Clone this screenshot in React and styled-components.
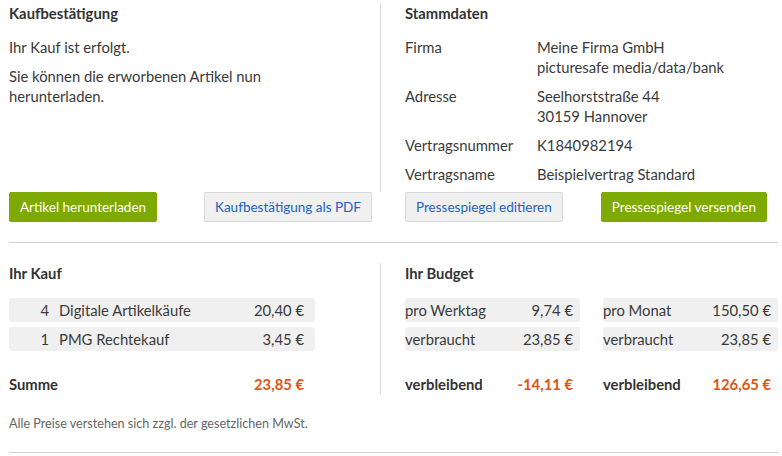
import styled, { createGlobalStyle } from "styled-components";

const GlobalStyle = createGlobalStyle`
  body {
    margin: 0;
    background: #fff;
    font-family: Lato, "Open Sans", sans-serif;
    font-size: 14.8px;
    color: #3a3a3a;
  }
`;

const stammdaten = [
  { label: "Firma", value: ["Meine Firma GmbH", "picturesafe media/data/bank"] },
  { label: "Adresse", value: ["Seelhorststraße 44", "30159 Hannover"] },
  { label: "Vertragsnummer", value: ["K1840982194"] },
  { label: "Vertragsname", value: ["Beispielvertrag Standard"] },
];

const kauf = [
  { qty: 4, name: "Digitale Artikelkäufe", price: "20,40 €" },
  { qty: 1, name: "PMG Rechtekauf", price: "3,45 €" },
];

const budget = [
  { rows: [["pro Werktag", "9,74 €"], ["verbraucht", "23,85 €"]], rest: "-14,11 €" },
  { rows: [["pro Monat", "150,50 €"], ["verbraucht", "23,85 €"]], rest: "126,65 €" },
];

export default function App() {
  return (
    <Page>
      <GlobalStyle />
      <TopSection>
        <InfoCell $divider>
          <Heading>Kaufbestätigung</Heading>
          <Text>Ihr Kauf ist erfolgt.</Text>
          <Text>
            Sie können die erworbenen Artikel nun
            <br />
            herunterladen.
          </Text>
        </InfoCell>
        <InfoCell>
          <Heading>Stammdaten</Heading>
          {stammdaten.map((row) => (
            <DataRow key={row.label}>
              <span>{row.label}</span>
              <div>
                {row.value.map((line) => (
                  <div key={line}>{line}</div>
                ))}
              </div>
            </DataRow>
          ))}
        </InfoCell>
        <Actions $rightPad={9}>
          <Button $primary>Artikel herunterladen</Button>
          <Button>Kaufbestätigung als PDF</Button>
        </Actions>
        <Actions $rightPad={11} $inset>
          <Button>Pressespiegel editieren</Button>
          <Button $primary>Pressespiegel versenden</Button>
        </Actions>
      </TopSection>

      <Rule />

      <BottomSection>
        <SummaryCell $divider>
          <Heading $gap={15}>Ihr Kauf</Heading>
          <RowList>
            {kauf.map((item) => (
              <PurchaseRow key={item.name}>
                <Qty>{item.qty}</Qty>
                <span>{item.name}</span>
                <Amount>{item.price}</Amount>
              </PurchaseRow>
            ))}
          </RowList>
          <SumRow $purchase>
            <span>Summe</span>
            <Amount $accent>23,85 €</Amount>
          </SumRow>
        </SummaryCell>
        <SummaryCell>
          <Heading $gap={15}>Ihr Budget</Heading>
          <BudgetGrid>
            {budget.map((col, i) => (
              <div key={i}>
                <RowList>
                  {col.rows.map(([label, value]) => (
                    <BudgetRow key={label}>
                      <span>{label}</span>
                      <span>{value}</span>
                    </BudgetRow>
                  ))}
                </RowList>
                <SumRow>
                  <span>verbleibend</span>
                  <Amount $accent>{col.rest}</Amount>
                </SumRow>
              </div>
            ))}
          </BudgetGrid>
        </SummaryCell>
      </BottomSection>

      <Note>Alle Preise verstehen sich zzgl. der gesetzlichen MwSt.</Note>
      <Rule />
    </Page>
  );
}

const Page = styled.div`
  width: 769px;
  padding: 0 4px 0 9px;
`;

const TopSection = styled.div`
  display: grid;
  grid-template-columns: 372px 1fr;
  padding-top: 3px;
`;

const InfoCell = styled.div`
  padding: 0 0 8px ${(p) => (p.$divider ? "0" : "24px")};
  border-right: ${(p) => (p.$divider ? "1px solid #d8d8d8" : "none")};
`;

const Heading = styled.h2`
  margin: 0 0 ${(p) => p.$gap ?? 14}px;
  font-size: 14.8px;
  line-height: 20px;
  font-weight: 700;
  color: #333;
`;

const Text = styled.p`
  margin: 0 0 9px;
  line-height: 20px;
`;

const DataRow = styled.div`
  display: grid;
  grid-template-columns: 132px 1fr;
  line-height: 20px;
  margin-bottom: 9px;

  &:last-child {
    margin-bottom: 0;
  }
`;

const Actions = styled.div`
  display: flex;
  justify-content: space-between;
  align-items: flex-start;
  padding-right: ${(p) => p.$rightPad}px;
  padding-left: ${(p) => (p.$inset ? "24px" : "0")};
`;

const Button = styled.button`
  height: 30px;
  padding: 0 10px;
  border-radius: 2px;
  font-family: inherit;
  font-size: 13.5px;
  cursor: pointer;
  border: 1px solid ${(p) => (p.$primary ? "#7ea900" : "#d9d9d9")};
  background: ${(p) => (p.$primary ? "#7ea900" : "#f0f0f0")};
  color: ${(p) => (p.$primary ? "#fff" : "#1e5fc6")};
`;

const Rule = styled.hr`
  margin: 20px 0 0;
  border: none;
  border-top: 1px solid #cfcfcf;
`;

const BottomSection = styled.div`
  display: grid;
  grid-template-columns: 372px 1fr;
  margin-top: 20px;
`;

const SummaryCell = styled.div`
  padding-left: ${(p) => (p.$divider ? "0" : "24px")};
  padding-right: ${(p) => (p.$divider ? "65px" : "0")};
  border-right: ${(p) => (p.$divider ? "1px solid #d8d8d8" : "none")};
`;

const RowList = styled.div`
  display: flex;
  flex-direction: column;
  gap: 5px;
`;

const PurchaseRow = styled.div`
  display: grid;
  grid-template-columns: 40px 1fr auto;
  column-gap: 10px;
  height: 24px;
  align-items: center;
  padding-right: 11px;
  background: #f0f0f0;
  border-radius: 3px;
`;

const Qty = styled.span`
  text-align: right;
`;

const Amount = styled.span`
  text-align: right;
  color: ${(p) => (p.$accent ? "#e0550f" : "inherit")};
  font-weight: ${(p) => (p.$accent ? 700 : 400)};
`;

const BudgetGrid = styled.div`
  display: grid;
  grid-template-columns: 1fr 1fr;
  column-gap: 23px;
`;

const BudgetRow = styled.div`
  display: flex;
  justify-content: space-between;
  align-items: center;
  height: 24px;
  padding-right: 7px;
  background: #f0f0f0;
  border-radius: 3px;
`;

const SumRow = styled.div`
  display: flex;
  justify-content: space-between;
  line-height: 20px;
  margin-top: 23px;
  padding-right: ${(p) => (p.$purchase ? "11px" : "7px")};
  font-weight: 700;
  color: #333;
`;

const Note = styled.p`
  margin: 22px 0 0;
  font-size: 12.6px;
  line-height: 16px;
  color: #666;
`;
